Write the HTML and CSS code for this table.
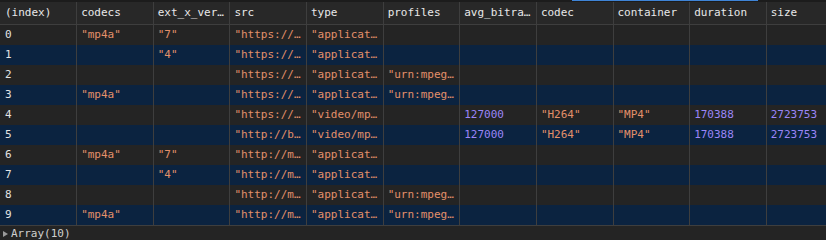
FILE: index.html
```html
<!DOCTYPE html>
<html>
<head>
<meta charset="utf-8">
<link rel="stylesheet" href="styles.css">
</head>
<body>
<div class="topstrip"><span class="focus-line"></span></div>
<div class="viewport">
<table class="ctable">
<colgroup>
<col><col><col><col><col><col><col><col><col><col><col>
</colgroup>
<thead>
<tr><th>(index)</th><th>codecs</th><th title="ext_x_version">ext_x_ver…</th><th>src</th><th>type</th><th>profiles</th><th title="avg_bitrate">avg_bitra…</th><th>codec</th><th>container</th><th>duration</th><th>size</th></tr>
</thead>
<tbody>
<tr><td>0</td><td class="s">"mp4a"</td><td class="s">"7"</td><td class="s">"https://…</td><td class="s">"applicat…</td><td></td><td></td><td></td><td></td><td></td><td></td></tr>
<tr class="alt"><td>1</td><td></td><td class="s">"4"</td><td class="s">"https://…</td><td class="s">"applicat…</td><td></td><td></td><td></td><td></td><td></td><td></td></tr>
<tr><td>2</td><td></td><td></td><td class="s">"https://…</td><td class="s">"applicat…</td><td class="s">"urn:mpeg…</td><td></td><td></td><td></td><td></td><td></td></tr>
<tr class="alt"><td>3</td><td class="s">"mp4a"</td><td></td><td class="s">"https://…</td><td class="s">"applicat…</td><td class="s">"urn:mpeg…</td><td></td><td></td><td></td><td></td><td></td></tr>
<tr><td>4</td><td></td><td></td><td class="s">"https://…</td><td class="s">"video/mp…</td><td></td><td class="n">127000</td><td class="s">"H264"</td><td class="s">"MP4"</td><td class="n">170388</td><td class="n">2723753</td></tr>
<tr class="alt"><td>5</td><td></td><td></td><td class="s">"http://b…</td><td class="s">"video/mp…</td><td></td><td class="n">127000</td><td class="s">"H264"</td><td class="s">"MP4"</td><td class="n">170388</td><td class="n">2723753</td></tr>
<tr><td>6</td><td class="s">"mp4a"</td><td class="s">"7"</td><td class="s">"http://m…</td><td class="s">"applicat…</td><td></td><td></td><td></td><td></td><td></td><td></td></tr>
<tr class="alt"><td>7</td><td></td><td class="s">"4"</td><td class="s">"http://m…</td><td class="s">"applicat…</td><td></td><td></td><td></td><td></td><td></td><td></td></tr>
<tr><td>8</td><td></td><td></td><td class="s">"http://m…</td><td class="s">"applicat…</td><td class="s">"urn:mpeg…</td><td></td><td></td><td></td><td></td><td></td></tr>
<tr class="alt"><td>9</td><td class="s">"mp4a"</td><td></td><td class="s">"http://m…</td><td class="s">"applicat…</td><td class="s">"urn:mpeg…</td><td></td><td></td><td></td><td></td><td></td></tr>
</tbody>
</table>
</div>
<div class="footer"><span class="tri"></span><span class="label">Array(10)</span></div>
</body>
</html>
```

FILE: styles.css
```css
html, body {
  margin: 0;
  padding: 0;
  background: #242424;
  font-family: "DejaVu Sans Mono", "Liberation Mono", monospace;
  font-size: 11px;
  color: #e3e3e3;
  overflow: hidden;
}
.topstrip {
  position: relative;
  height: 2px;
  background: #1c1c1c;
}
.focus-line {
  position: absolute;
  left: 572px;
  top: 0;
  width: 186px;
  height: 1px;
  background: #3f84d6;
}
.viewport {
  width: 826px;
  overflow: hidden;
}
.ctable {
  width: 843px;
  table-layout: fixed;
  border-collapse: collapse;
  border-spacing: 0;
}
.ctable col {
  width: 76.64px;
}
.ctable th,
.ctable td {
  padding: 0 2px 0 4px;
  border-right: 1px solid #3e3e3e;
  white-space: nowrap;
  overflow: hidden;
  text-align: left;
  box-sizing: border-box;
}
.ctable th:first-child,
.ctable td:first-child {
  padding-left: 5px;
}
.ctable th {
  height: 22px;
  font-weight: normal;
  background: #282828;
  color: #e8e8e8;
  border-bottom: 1px solid #3e3e3e;
  vertical-align: middle;
}
.ctable td {
  height: 20px;
  line-height: 20px;
  background: #242424;
}
.ctable tr.alt td {
  background: #0b2340;
}
.ctable tbody tr:last-child td {
  border-bottom: 1px solid #3e3e3e;
}
.ctable td.s {
  color: #e3906a;
}
.ctable td.n {
  color: #9a86f7;
}
.footer {
  display: flex;
  align-items: center;
  height: 16px;
  padding-left: 3px;
  color: #cfcfcf;
}
.tri {
  width: 0;
  height: 0;
  border-top: 3.5px solid transparent;
  border-bottom: 3.5px solid transparent;
  border-left: 5px solid #9a9a9a;
  margin-right: 3px;
}
```
